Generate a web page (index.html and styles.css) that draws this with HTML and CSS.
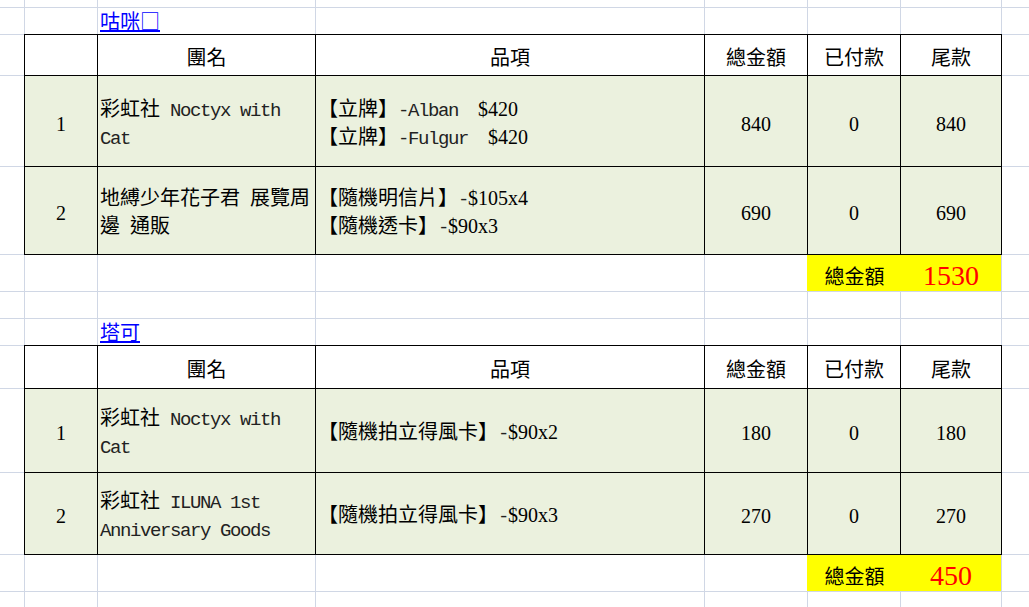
FILE: index.html
```html
<!DOCTYPE html>
<html lang="zh-Hant">
<head>
<meta charset="utf-8">
<title>團購表</title>
<link rel="stylesheet" href="styles.css">
</head>
<body>
<table class="sheet">
  <colgroup>
    <col class="c-a"><col class="c-b"><col class="c-c"><col class="c-d"><col class="c-e"><col class="c-f"><col class="c-g"><col class="c-h">
  </colgroup>
  <tr class="r-top"><td></td><td></td><td></td><td></td><td></td><td></td><td></td><td></td></tr>
  <tr class="r-title"><td></td><td></td><td class="title"><a href="#" class="link">咕咪□</a></td><td></td><td></td><td></td><td></td><td></td></tr>
  <tr class="r-head1">
    <td></td>
    <td class="b"></td>
    <td class="b hd">團名</td>
    <td class="b hd">品項</td>
    <td class="b hd">總金額</td>
    <td class="b hd">已付款</td>
    <td class="b hd">尾款</td>
    <td></td>
  </tr>
  <tr class="r-d1a">
    <td></td>
    <td class="b g num">1</td>
    <td class="b g txt">彩虹社<span class="m"> Noctyx with</span><br><span class="m">Cat</span></td>
    <td class="b g txt">【立牌】<span class="m">-Alban  </span>$420<br>【立牌】<span class="m">-Fulgur  </span>$420</td>
    <td class="b g num">840</td>
    <td class="b g num">0</td>
    <td class="b g num">840</td>
    <td></td>
  </tr>
  <tr class="r-d1b">
    <td></td>
    <td class="b g num">2</td>
    <td class="b g txt">地縛少年花子君<span class="m"> </span>展覽周<br>邊<span class="m"> </span>通販</td>
    <td class="b g txt">【隨機明信片】<span class="m">-</span>$105x4<br>【隨機透卡】<span class="m">-</span>$90x3</td>
    <td class="b g num">690</td>
    <td class="b g num">0</td>
    <td class="b g num">690</td>
    <td></td>
  </tr>
  <tr class="r-total">
    <td></td><td></td><td></td><td></td><td></td>
    <td colspan="2" class="total"><div class="total-in"><span class="total-label">總金額</span><span class="total-amt">1530</span></div></td>
    <td></td>
  </tr>
  <tr class="r-blank"><td></td><td></td><td></td><td></td><td></td><td></td><td></td><td></td></tr>
  <tr class="r-title"><td></td><td></td><td class="title"><a href="#" class="link">塔可</a></td><td></td><td></td><td></td><td></td><td></td></tr>
  <tr class="r-head2">
    <td></td>
    <td class="b"></td>
    <td class="b hd">團名</td>
    <td class="b hd">品項</td>
    <td class="b hd">總金額</td>
    <td class="b hd">已付款</td>
    <td class="b hd">尾款</td>
    <td></td>
  </tr>
  <tr class="r-d2a">
    <td></td>
    <td class="b g num">1</td>
    <td class="b g txt">彩虹社<span class="m"> Noctyx with</span><br><span class="m">Cat</span></td>
    <td class="b g txt">【隨機拍立得風卡】<span class="m">-</span>$90x2</td>
    <td class="b g num">180</td>
    <td class="b g num">0</td>
    <td class="b g num">180</td>
    <td></td>
  </tr>
  <tr class="r-d2b">
    <td></td>
    <td class="b g num">2</td>
    <td class="b g txt">彩虹社<span class="m"> ILUNA 1st</span><br><span class="m">Anniversary Goods</span></td>
    <td class="b g txt">【隨機拍立得風卡】<span class="m">-</span>$90x3</td>
    <td class="b g num">270</td>
    <td class="b g num">0</td>
    <td class="b g num">270</td>
    <td></td>
  </tr>
  <tr class="r-total">
    <td></td><td></td><td></td><td></td><td></td>
    <td colspan="2" class="total"><div class="total-in"><span class="total-label">總金額</span><span class="total-amt">450</span></div></td>
    <td></td>
  </tr>
  <tr class="r-end"><td></td><td></td><td></td><td></td><td></td><td></td><td></td><td></td></tr>
</table>
</body>
</html>
```

FILE: styles.css
```css
html, body {
  margin: 0;
  padding: 0;
  background: #fff;
  overflow: hidden;
}

body {
  width: 1029px;
  height: 607px;
}

.sheet {
  border-collapse: separate;
  border-spacing: 1px;
  background: #d0d7e5;
  table-layout: fixed;
  width: 1056px;
  margin: -1px 0 0 -1px;
  font-family: "Liberation Serif", "Noto Sans CJK TC", serif;
  font-size: 20px;
  color: #000;
}

.c-a { width: 24px; }
.c-b { width: 72px; }
.c-c { width: 217px; }
.c-d { width: 388px; }
.c-e { width: 102px; }
.c-f { width: 92px; }
.c-g { width: 100px; }
.c-h { width: 60px; }

.r-top { height: 7px; }
.r-title { height: 26px; }
.r-head1 { height: 40px; }
.r-d1a { height: 90px; }
.r-d1b { height: 87px; }
.r-total { height: 36px; }
.r-blank { height: 26px; }
.r-head2 { height: 42px; }
.r-d2a { height: 83px; }
.r-d2b { height: 81px; }
.r-end { height: 40px; }

.sheet td {
  background: #fff;
  padding: 0;
  line-height: 26px;
  white-space: nowrap;
  vertical-align: middle;
  overflow: visible;
}

.sheet td.b {
  box-shadow: 0 0 0 1px #000;
}

.sheet td.g {
  background: #ebf1de;
}

.sheet td.hd {
  text-align: center;
  padding-top: 4px;
  font-family: "Noto Sans CJK TC", sans-serif;
}

.sheet td.num {
  text-align: center;
  padding-top: 5px;
}

.sheet td.txt {
  text-align: left;
  padding: 5px 0 0 2px;
}

.m {
  font-family: "Liberation Mono", monospace;
  font-size: 19px;
  letter-spacing: -1.4px;
  white-space: pre;
  color: #222;
}

.sheet td.title {
  vertical-align: bottom;
  padding: 0 0 1px 2px;
  line-height: 22px;
}

.link {
  color: #0000ff;
  text-decoration: underline;
  font-family: "Noto Sans CJK TC", sans-serif;
}

.sheet td.total {
  background: #ffff00;
  box-shadow: -1px 0 0 #ffff00;
  padding: 6px 0 0 0;
}

.total-in {
  display: grid;
  grid-template-columns: 93px 100px;
  align-items: center;
  text-align: center;
}

.total-label {
  font-family: "Noto Sans CJK TC", sans-serif;
  font-size: 20px;
  line-height: 28px;
}

.total-amt {
  color: #ff0000;
  font-size: 28px;
  line-height: 28px;
}
```
